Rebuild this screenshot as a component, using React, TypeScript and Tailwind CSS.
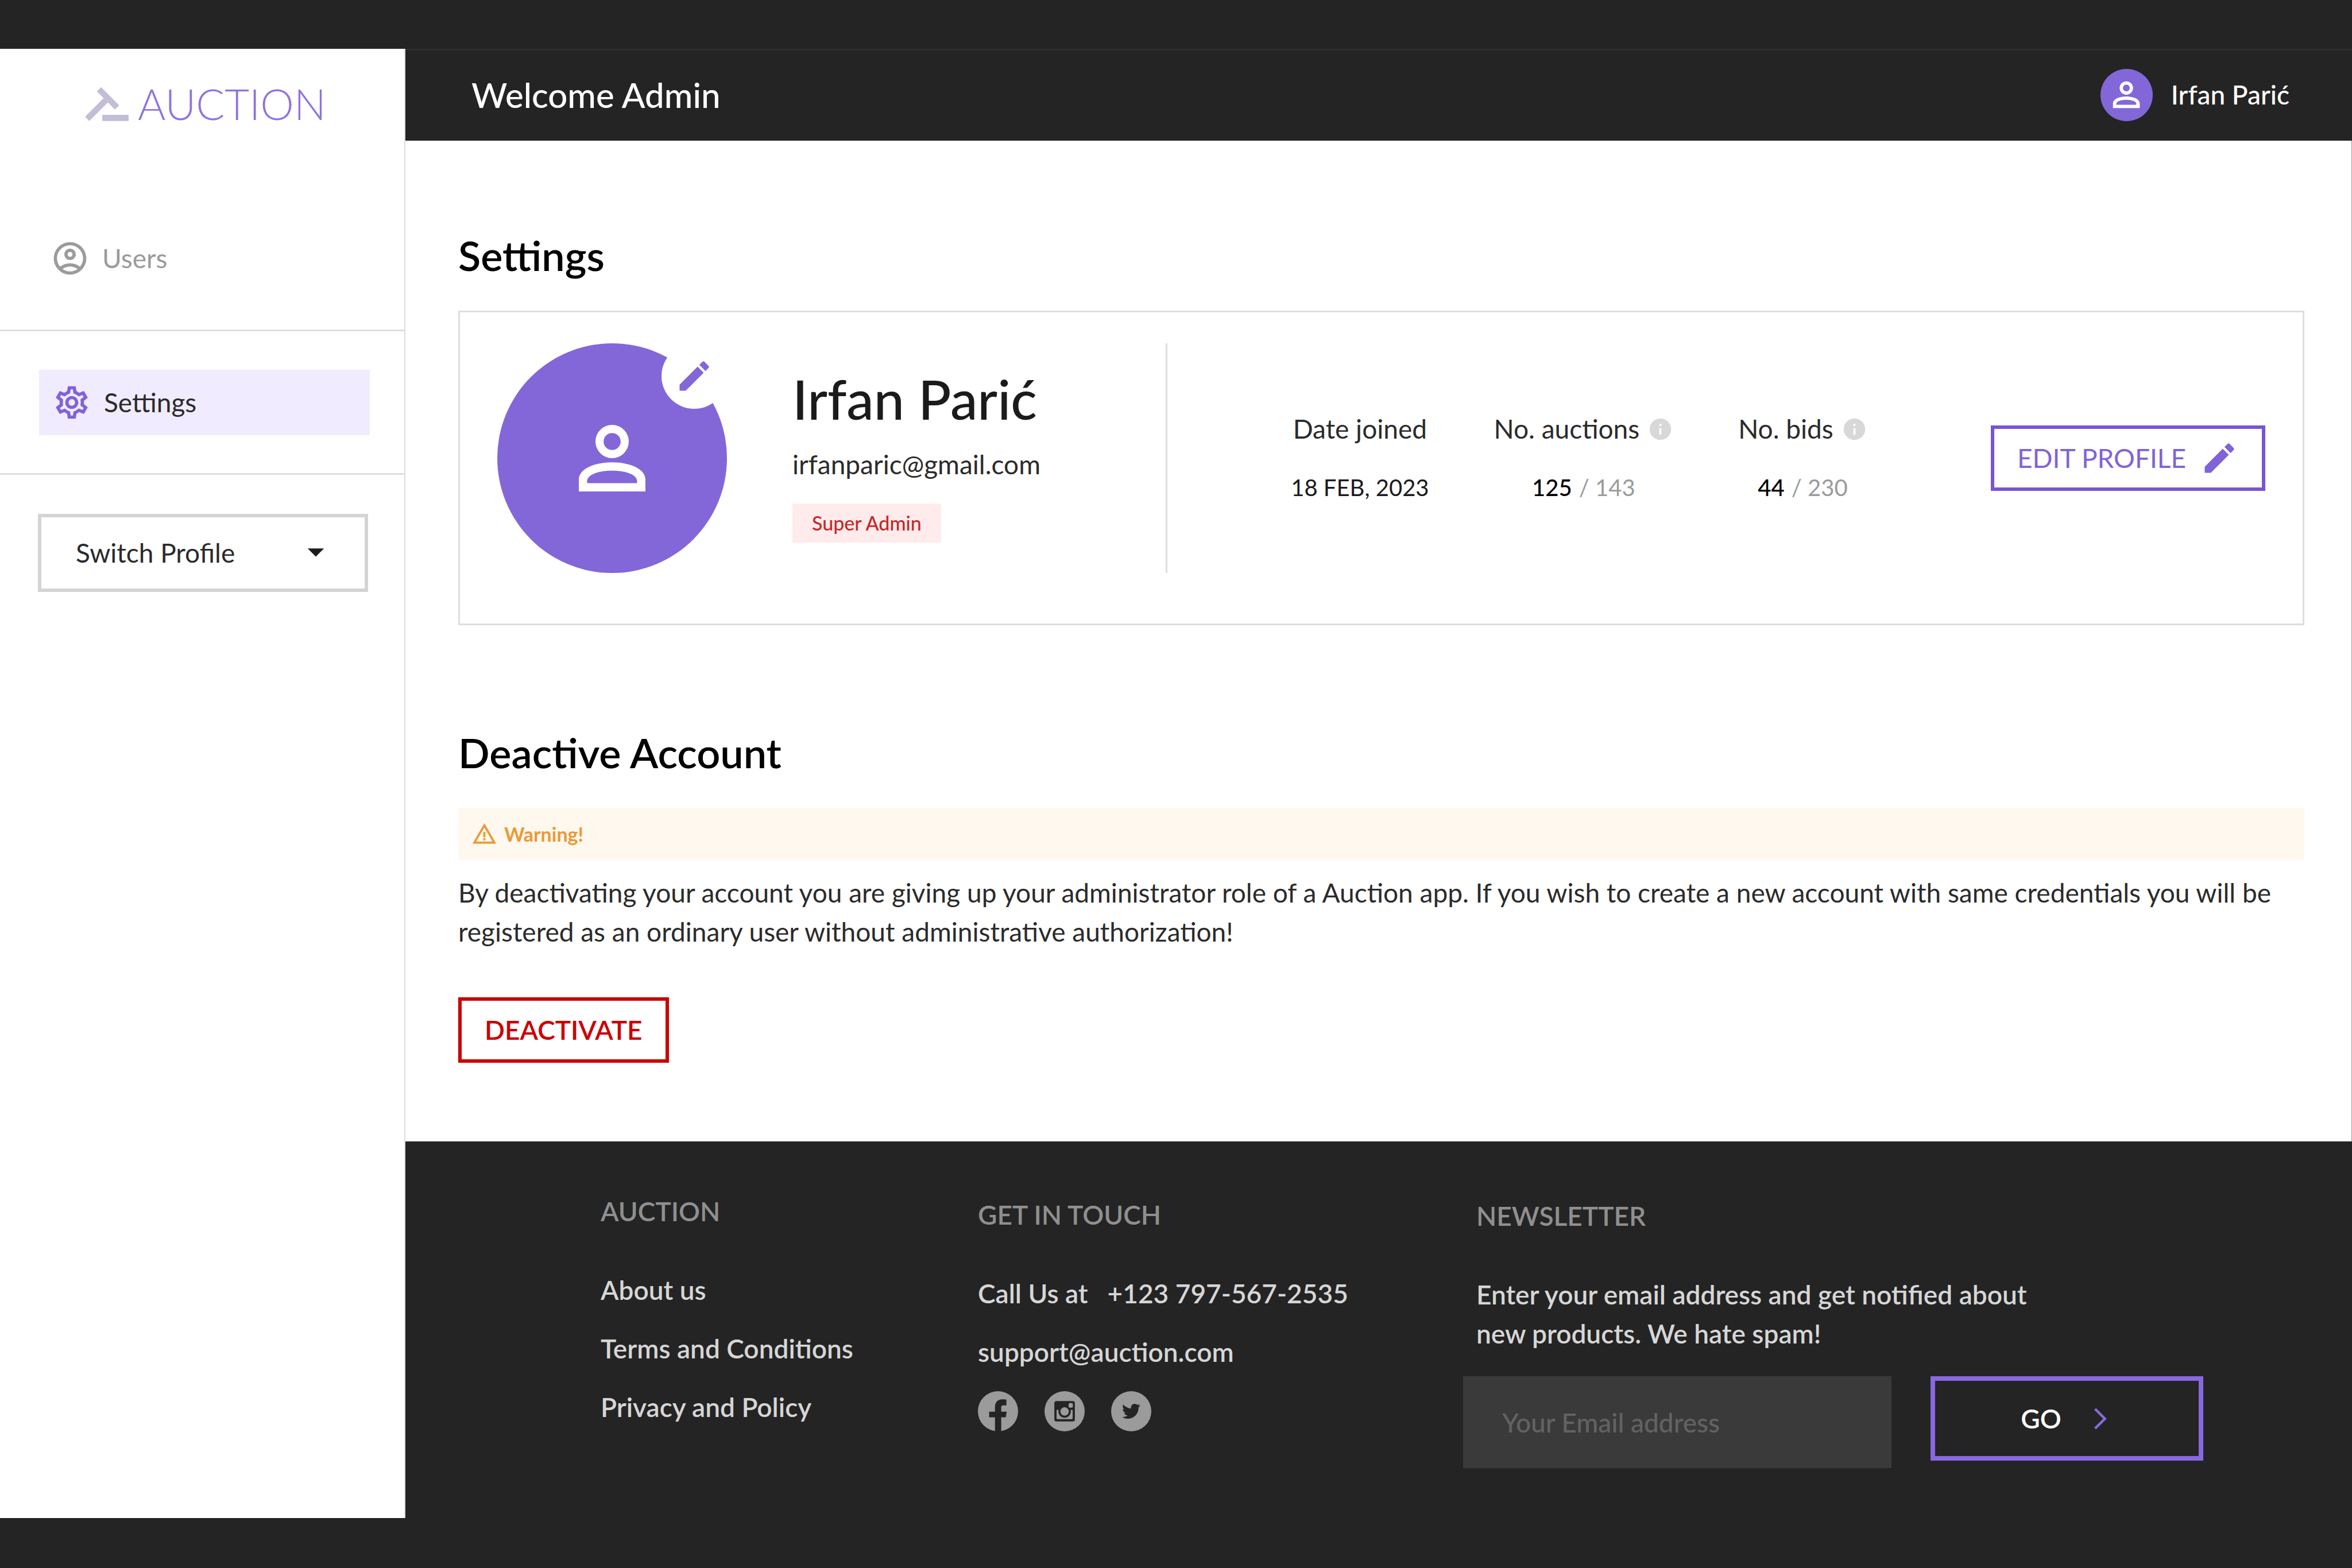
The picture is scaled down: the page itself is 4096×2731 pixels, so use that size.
import type { ReactNode } from "react";
import {
  MdArrowDropDown,
  MdEdit,
  MdInfo,
  MdOutlineAccountCircle,
  MdOutlineSettings,
  MdWarningAmber,
} from "react-icons/md";
import { FaTwitter } from "react-icons/fa";

function PersonIcon({ className }: { className: string }) {
  return (
    <svg viewBox="0 0 24 24" fill="currentColor" fillRule="evenodd" className={className} aria-hidden="true">
      <path d="M12 4a4 4 0 1 0 0 8 4 4 0 0 0 0-8zm0 1.95a2.05 2.05 0 1 1 0 4.1 2.05 2.05 0 0 1 0-4.1z" />
      <path d="M12 13c-4.5 0-8 1.7-8 4.1V20h16v-2.9C20 14.700 16.500 13 12 13zm0 2c3.300 0 6 1 6 2.500V18H6v-.5C6 16 8.700 15 12 15z" />
    </svg>
  );
}

function GavelLogo() {
  return (
    <svg viewBox="110 128 333 257" className="h-[59px] w-[76px] text-[#c3bdd6]" aria-hidden="true">
      <path d="M127 368 268 227M217 143 355 281" stroke="currentColor" strokeWidth="46" fill="none" />
      <rect x="242" y="338" width="201" height="47" rx="6" fill="currentColor" />
    </svg>
  );
}

function FacebookIcon() {
  return (
    <svg viewBox="2 2 20 20" className="size-[70px]" aria-hidden="true">
      <circle cx="12" cy="12" r="10" fill="#9b9b9b" />
      <path
        d="M16.200 6.200v2.900h-1.600c-.7 0-1 .4-1 1v2.100h2.700l-.4 2.800h-2.300v7.500h-3.100V15H7.600v-2.800h2.900V10c0-2.500 1.400-3.900 3.600-3.900.8 0 1.600.05 2.100.1z"
        fill="#242424"
      />
    </svg>
  );
}

function InstagramIcon() {
  return (
    <svg viewBox="2 2 20 20" className="size-[70px]" aria-hidden="true">
      <circle cx="12" cy="12" r="10" fill="#9b9b9b" />
      <rect x="6.900" y="6.900" width="10.200" height="10.200" rx="1" fill="#242424" />
      <rect x="8" y="11.300" width="8" height="4.600" rx=".3" fill="#9b9b9b" />
      <circle cx="12" cy="12.100" r="3.100" fill="#242424" />
      <circle cx="12" cy="12.100" r="2.100" fill="#9b9b9b" />
      <rect x="14" y="7.900" width="2.100" height="2.300" rx=".5" fill="#9b9b9b" />
    </svg>
  );
}

function Stat({ label, info, children }: { label: string; info?: boolean; children: ReactNode }) {
  return (
    <div className="flex flex-col items-center gap-[34px]">
      <dt className="flex items-center gap-[14px] text-[#2b2b2b]">
        {label}
        {info && <MdInfo className="size-[45px] text-[#d8d8d8]" />}
      </dt>
      <dd className="flex gap-3 text-[40px] text-[#1b1b1b]">{children}</dd>
    </div>
  );
}

function FooterHeading({ children }: { children: ReactNode }) {
  return <h2 className="mb-[69px] text-[#8f8f8f]">{children}</h2>;
}

export default function App() {
  return (
    <div className="flex min-h-screen bg-[#242424] pt-[85px] pb-[87px] font-['Lato',sans-serif] text-[46px] leading-[68px]">
      <aside className="w-[706px] shrink-0 border-r-2 border-[#dedede] bg-white pt-[53px]">
        <a href="#" className="ml-[148px] flex items-center gap-4">
          <GavelLogo />
          <span className="text-[74px] leading-[86px] font-light text-[#8f73df]">AUCTION</span>
        </a>
        <nav>
          <div className="mt-[192px] border-b-[3px] border-[#dedede] pb-[90px] pl-[88px]">
            <a href="#" className="flex items-center gap-[22px] text-[#9b9b9b]">
              <MdOutlineAccountCircle className="size-[68px]" />
              Users
            </a>
          </div>
          <div className="border-b-[3px] border-[#dedede] pt-[67px] pr-[60px] pb-[66px] pl-[68px]">
            <a
              href="#"
              aria-current="page"
              className="flex items-center gap-[22px] bg-[#f0ebfe] px-[23px] py-[23px] text-[#2b2b2b]"
            >
              <MdOutlineSettings className="size-[68px] text-[#8063d8]" />
              Settings
            </a>
          </div>
        </nav>
        <div className="relative mt-[68px] mr-[63px] ml-[66px]">
          <select
            aria-label="Switch Profile"
            className="h-[136px] w-full appearance-none rounded-none border-[6px] border-[#d4d4d4] bg-white pl-[60px] text-[#2b2b2b]"
          >
            <option>Switch Profile</option>
          </select>
          <MdArrowDropDown className="pointer-events-none absolute top-[32px] right-[57px] size-[68px] text-[#1b1b1b]" />
        </div>
      </aside>

      <div className="flex min-w-0 flex-1 flex-col">
        <header className="flex h-[160px] items-center justify-between border-t-[3px] border-[#2f2f2f] pr-[109px] pb-[3px] pl-[115px] text-white">
          <h1 className="text-[60px] font-medium">Welcome Admin</h1>
          <div className="flex items-center gap-8">
            <span className="flex size-[91px] items-center justify-center rounded-full bg-[#8367d8]">
              <PersonIcon className="size-[70px]" />
            </span>
            <span className="font-medium">Irfan Parić</span>
          </div>
        </header>

        <main className="flex-1 border-r border-[#9b9b9b] bg-white pt-[158px] pr-[82px] pb-[136px] pl-[92px]">
          <section>
            <h2 className="mb-14 text-[72px] leading-[82px] font-semibold text-black">Settings</h2>
            <div className="flex items-center border-[3px] border-[#dedede] px-[65px] pt-[54px] pb-[88px]">
              <div className="relative size-[400px] shrink-0">
                <div className="flex size-full items-center justify-center rounded-full bg-[#8367d8] text-white">
                  <PersonIcon className="size-[174px]" />
                </div>
                <button
                  type="button"
                  aria-label="Change photo"
                  className="absolute top-0 right-0 flex size-[114px] items-center justify-center rounded-full bg-white text-[#8367d8]"
                >
                  <MdEdit className="size-[68px]" />
                </button>
              </div>
              <div className="mt-10 ml-[114px] w-[650px] self-start">
                <h3 className="text-[95px] leading-[113px] font-medium text-[#1b1b1b]">Irfan Parić</h3>
                <p className="mt-6 text-[#2b2b2b]">irfanparic@gmail.com</p>
                <span className="mt-[34px] inline-block bg-[#ffebeb] px-[34px] text-[34px] leading-[68px] font-medium text-[#c62828]">
                  Super Admin
                </span>
              </div>
              <div className="h-[400px] w-[3px] bg-[#dedede]" />
              <dl className="flex flex-1 justify-center gap-[113px]">
                <Stat label="Date joined">18 FEB, 2023</Stat>
                <Stat label="No. auctions" info>
                  <span className="font-medium text-black">125</span>
                  <span className="text-[#9b9b9b]">/ 143</span>
                </Stat>
                <Stat label="No. bids" info>
                  <span className="font-medium text-black">44</span>
                  <span className="text-[#9b9b9b]">/ 230</span>
                </Stat>
              </dl>
              <button
                type="button"
                className="flex h-[114px] items-center gap-6 border-[6px] border-[#7755d4] px-10 text-[#8063d8]"
              >
                EDIT PROFILE
                <MdEdit className="size-[68px]" />
              </button>
            </div>
          </section>

          <section className="mt-[180px]">
            <h2 className="mb-14 text-[72px] leading-[82px] font-semibold text-black">Deactive Account</h2>
            <div className="flex h-[91px] items-center gap-3 bg-[#fff8ee] px-[23px] text-[34px] font-bold text-[#e99a38]">
              <MdWarningAmber className="size-[45px]" />
              Warning!
            </div>
            <p className="mt-[23px] text-[#2b2b2b]">
              By deactivating your account you are giving up your administrator role of a Auction app. If you wish to
              create a new account with same credentials you will be registered as an ordinary user without
              administrative authorization!
            </p>
            <button
              type="button"
              className="mt-[80px] block h-[114px] border-[6px] border-[#cc0000] px-10 font-semibold text-[#cc0000]"
            >
              DEACTIVATE
            </button>
          </section>
        </main>

        <footer className="flex h-[656px] pt-[88px] pl-[340px] font-semibold text-[#d6d6d6]">
          <div className="w-[657px]">
            <FooterHeading>AUCTION</FooterHeading>
            <ul className="flex flex-col gap-[34px]">
              <li><a href="#">About us</a></li>
              <li><a href="#">Terms and Conditions</a></li>
              <li><a href="#">Privacy and Policy</a></li>
            </ul>
          </div>
          <div className="w-[845px] pt-1.5">
            <FooterHeading>GET IN TOUCH</FooterHeading>
            <p className="flex gap-[34px]">
              <span>Call Us at</span>
              <a href="tel:+1237975672535">+123 797-567-2535</a>
            </p>
            <a href="mailto:support@auction.com" className="mt-[34px] block">support@auction.com</a>
            <div className="mt-[34px] flex gap-[46px]">
              <a href="#" aria-label="Facebook"><FacebookIcon /></a>
              <a href="#" aria-label="Instagram"><InstagramIcon /></a>
              <a
                href="#"
                aria-label="Twitter"
                className="flex size-[70px] items-center justify-center rounded-full bg-[#9b9b9b] text-[#242424]"
              >
                <FaTwitter className="size-8" />
              </a>
            </div>
          </div>
          <form className="pt-2">
            <div className="w-[1000px] pl-[23px]">
              <FooterHeading>NEWSLETTER</FooterHeading>
              <label htmlFor="email">Enter your email address and get notified about new products. We hate spam!</label>
            </div>
            <div className="mt-10 flex items-start gap-[68px]">
              <input
                id="email"
                type="email"
                placeholder="Your Email address"
                className="h-[160px] w-[746px] bg-[#3a3a3a] px-[68px] font-medium text-white placeholder:text-[#626262]"
              />
              <button
                type="button"
                className="flex h-[147px] w-[475px] items-center justify-center gap-[34px] border-8 border-[#8868e0] pl-3 text-white"
              >
                GO
                <svg viewBox="0 0 24 24" className="size-[68px] text-[#8868e0]" fill="none" aria-hidden="true">
                  <path d="m8.700 6 6 6-6 6" stroke="currentColor" strokeWidth="1.600" />
                </svg>
              </button>
            </div>
          </form>
        </footer>
      </div>
    </div>
  );
}
